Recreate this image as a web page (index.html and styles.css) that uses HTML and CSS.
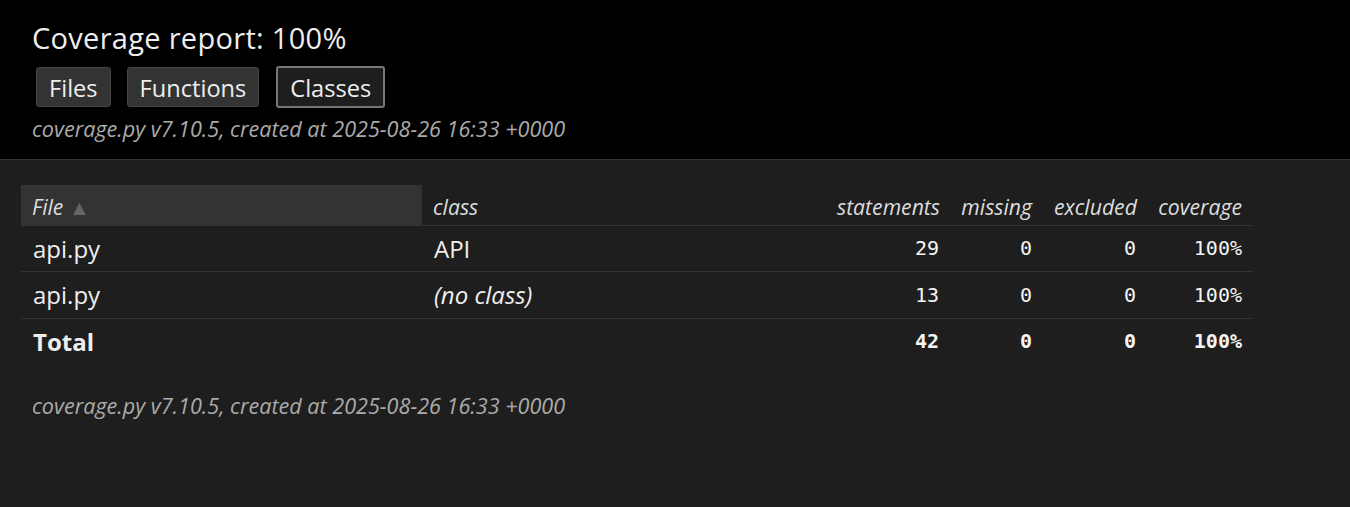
FILE: index.html
```html
<!DOCTYPE html>
<html lang="en">
<head>
<meta charset="utf-8">
<title>Coverage report</title>
<link rel="stylesheet" href="styles.css">
</head>
<body>
<header class="header">
  <div class="header-content">
    <h1 class="title">Coverage report: <span class="pc">100%</span></h1>
    <nav class="tabs">
      <a class="tab" href="#">Files</a>
      <a class="tab" href="#">Functions</a>
      <a class="tab tab-current" href="#">Classes</a>
    </nav>
    <p class="meta">coverage.py v7.10.5, created at 2025-08-26 16:33 +0000</p>
  </div>
</header>
<main class="main">
  <table class="index">
    <colgroup>
      <col class="c-name"><col class="c-class"><col class="c-stmt"><col class="c-miss"><col class="c-excl"><col class="c-cov">
    </colgroup>
    <thead>
      <tr class="head-row">
        <th class="th name sorted">File <span class="arrow">▲</span></th>
        <th class="th name">class</th>
        <th class="th">statements</th>
        <th class="th">missing</th>
        <th class="th">excluded</th>
        <th class="th">coverage</th>
      </tr>
    </thead>
    <tbody>
      <tr class="row">
        <td class="td name">api.py</td>
        <td class="td name">API</td>
        <td class="td num">29</td>
        <td class="td num">0</td>
        <td class="td num">0</td>
        <td class="td num">100%</td>
      </tr>
      <tr class="row">
        <td class="td name">api.py</td>
        <td class="td name"><em class="noclass">(no class)</em></td>
        <td class="td num">13</td>
        <td class="td num">0</td>
        <td class="td num">0</td>
        <td class="td num">100%</td>
      </tr>
    </tbody>
    <tfoot>
      <tr class="row total">
        <td class="td name">Total</td>
        <td class="td name"></td>
        <td class="td num">42</td>
        <td class="td num">0</td>
        <td class="td num">0</td>
        <td class="td num">100%</td>
      </tr>
    </tfoot>
  </table>
</main>
<footer class="footer">
  <p class="meta">coverage.py v7.10.5, created at 2025-08-26 16:33 +0000</p>
</footer>
</body>
</html>
```

FILE: styles.css
```css
html, body {
  margin: 0;
  padding: 0;
}
body {
  background: #1e1e1e;
  color: #eee;
  font-family: "Open Sans", "Noto Sans", sans-serif;
  font-size: 22px;
}
.header {
  background: #000;
  border-bottom: 1px solid #333;
}
.header-content {
  padding: 19px 32px 16px;
}
.title {
  margin: 0;
  font-size: 29px;
  letter-spacing: 0.3px;
  font-weight: normal;
  line-height: 38px;
}
.tabs {
  display: flex;
  gap: 15px;
  margin: 10px 0 0 4px;
}
.tab {
  display: block;
  box-sizing: border-box;
  height: 40px;
  padding: 2px 12px 0;
  font-size: 23.6px;
  line-height: 36px;
  color: #eee;
  text-decoration: none;
  background: #333;
  border: 1px solid #444;
  border-radius: 3px;
}
.tab:first-child {
  margin-right: 1px;
}
.tab-current {
  background: #1e1e1e;
  border: 2px solid #777;
  padding-top: 2px;
  line-height: 36px;
  margin-top: -1px;
  margin-left: 2px;
  height: 42px;
}
.meta {
  margin: 7px 0 0;
  color: #aaa;
  font-style: italic;
  font-size: 21.6px;
  line-height: 28px;
}
.main {
  padding: 25px 0 0 21px;
}
.index {
  border-collapse: collapse;
  table-layout: fixed;
  width: 1232px;
}
.c-name { width: 401px; }
.c-class { width: 404px; }
.c-stmt { width: 124px; }
.c-miss { width: 93px; }
.c-excl { width: 104px; }
.c-cov { width: 106px; }
.th, .td {
  padding: 0 11px;
  text-align: right;
  border-bottom: 1px solid #333;
}
.th {
  height: 40px;
  font-style: italic;
  font-weight: normal;
  font-size: 21.2px;
  color: #ddd;
  vertical-align: middle;
  padding-top: 4px;
  box-sizing: border-box;
}
.th.name, .td.name {
  text-align: left;
}
.td.name {
  padding-left: 12px;
}
.sorted {
  background: #333;
}
.arrow {
  color: #666;
  font-style: normal;
  font-size: 21px;
}
.td {
  height: 45.5px;
  vertical-align: middle;
}
.td.name {
  font-size: 24px;
}
.td.num {
  font-family: "DejaVu Sans Mono", "Liberation Mono", monospace;
  font-size: 20px;
  color: #f4f4f4;
}
.noclass {
  font-style: italic;
}
.total .td {
  border-bottom: none;
  font-weight: bold;
}
.footer {
  padding: 28px 32px;
}
.footer .meta {
  margin: 0;
}
```
